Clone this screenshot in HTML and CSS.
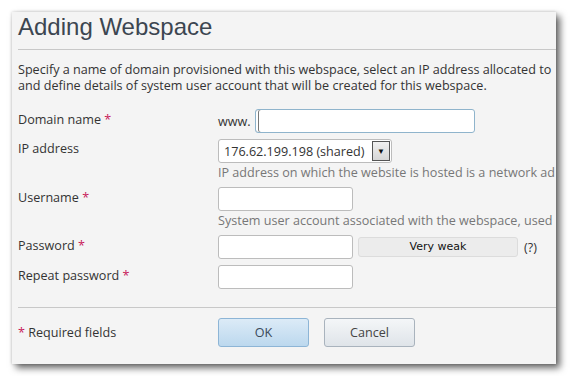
FILE: index.html
```html
<!DOCTYPE html>
<html>
  <head>
    <title>Adding Webspace</title>
    <link rel="stylesheet" href="styles.css">
  </head>
  <body>
    <div class="dialog">
      <h1 class="dialog-title">Adding Webspace</h1>
      <p class="intro">
        Specify a name of domain provisioned with this webspace, select an IP address allocated to<br>
        and define details of system user account that will be created for this webspace.
      </p>

      <div class="form">
        <div class="row">
          <label class="label">Domain name <span class="req">*</span></label>
          <div class="field">
            <span class="prefix">www.</span>
            <input class="input input-domain focused" type="text">
          </div>
        </div>

        <div class="row row-ip">
          <label class="label">IP address</label>
          <div class="field field-col">
            <div class="select">
              <span class="select-value">176.62.199.198 (shared)</span>
              <span class="select-btn">&#9660;</span>
            </div>
            <div class="hint">IP address on which the website is hosted is a network ad</div>
          </div>
        </div>

        <div class="row">
          <label class="label">Username <span class="req">*</span></label>
          <div class="field field-col">
            <input class="input" type="text">
            <div class="hint">System user account associated with the webspace, used</div>
          </div>
        </div>

        <div class="row">
          <label class="label">Password <span class="req">*</span></label>
          <div class="field">
            <input class="input" type="password">
            <div class="strength">Very weak</div>
            <span class="help">(?)</span>
          </div>
        </div>

        <div class="row">
          <label class="label">Repeat password <span class="req">*</span></label>
          <div class="field">
            <input class="input" type="password">
          </div>
        </div>
      </div>

      <div class="footer">
        <div class="label"><span class="req">*</span> Required fields</div>
        <div class="buttons">
          <button class="btn btn-primary">OK</button>
          <button class="btn">Cancel</button>
        </div>
      </div>
    </div>
  </body>
</html>
```

FILE: styles.css
```css
body {
  margin: 0;
  background: #fff;
  font-family: 'Open Sans', 'Liberation Sans', sans-serif;
  font-size: 12.6px;
  color: #333;
}

.dialog {
  margin: 12px;
  width: 538px;
  height: 352px;
  padding-left: 6px;
  background: #f4f4f4;
  overflow: hidden;
  box-shadow: 4px 4px 7px rgba(0, 0, 0, 0.6), 0 0 3px rgba(0, 0, 0, 0.2);
}

.dialog-title {
  margin: 0;
  height: 37px;
  font-family: 'Liberation Sans', Arial, sans-serif;
  font-weight: normal;
  font-size: 24px;
  line-height: 30px;
  color: #3c4651;
  border-bottom: 1px solid #c8c8c8;
}

.intro {
  margin: 12px 0 0;
  line-height: 16px;
  white-space: nowrap;
}

.form {
  margin-top: 15px;
}

.row {
  display: flex;
  margin-bottom: 6px;
}

.label {
  width: 200px;
  flex: none;
  line-height: 22px;
}

.req {
  color: #c8195a;
}

.field {
  display: flex;
  align-items: center;
  white-space: nowrap;
}

.field-col {
  flex-direction: column;
  align-items: flex-start;
}

.prefix {
  margin-right: 4px;
}

.input {
  box-sizing: border-box;
  width: 135px;
  height: 24px;
  margin: 0;
  border: 1px solid #bcbcbc;
  border-radius: 3px;
  background: #fff;
  font: inherit;
}

.input-domain {
  width: 220px;
}

.focused {
  border-color: #8fb4cc;
  box-shadow: inset 2px 0 0 #fff, inset 3px 0 0 #777;
}

.row-ip .label {
  line-height: 20px;
}

.select {
  box-sizing: border-box;
  display: flex;
  align-items: center;
  width: 174px;
  height: 24px;
  border: 1px solid #bcbcbc;
  border-radius: 3px;
  background: #fff;
  padding-left: 5px;
}

.select-value {
  flex: 1;
}

.select-btn {
  box-sizing: border-box;
  width: 18px;
  height: 20px;
  margin-right: 1px;
  border: 1px solid #555;
  background: linear-gradient(#f0f0f0, #d6d6d6);
  font-size: 8px;
  line-height: 18px;
  text-align: center;
  color: #111;
}

.hint {
  color: #777;
  line-height: 16px;
  margin-top: 2px;
}

.strength {
  box-sizing: border-box;
  width: 160px;
  height: 20px;
  margin-left: 5px;
  border: 1px solid #dcdcdc;
  border-radius: 3px;
  background: #ececec;
  text-align: center;
  line-height: 18px;
  font-family: 'DejaVu Sans', Tahoma, sans-serif;
  font-size: 11px;
  color: #111;
}

.help {
  margin-left: 6px;
  color: #333;
}

.footer {
  display: flex;
  align-items: center;
  margin-top: 18px;
  padding-top: 10px;
  border-top: 1px solid #c8c8c8;
}

.buttons {
  display: flex;
  gap: 15px;
}

.btn {
  box-sizing: border-box;
  width: 91px;
  height: 29px;
  border: 1px solid #a9b3bd;
  border-radius: 3px;
  background: linear-gradient(#f4f6f8, #dfe4e9);
  font: inherit;
  color: #444;
}

.btn-primary {
  border-color: #8db5d6;
  background: linear-gradient(#dcebf7, #bcd8ee);
  color: #3a4a5a;
}
```
